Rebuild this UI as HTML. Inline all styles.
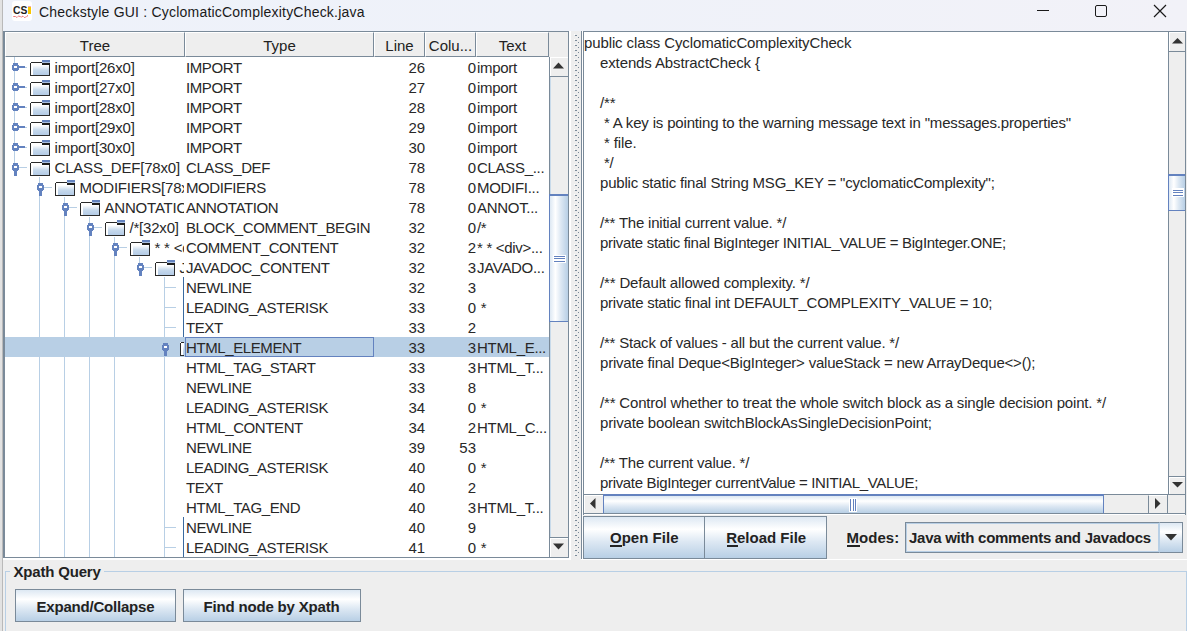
<!DOCTYPE html>
<html><head><meta charset="utf-8"><style>
html,body{margin:0;padding:0;}
body{width:1187px;height:631px;overflow:hidden;position:relative;background:#eeeeee;font-family:"Liberation Sans",sans-serif;}
div,span,svg{position:absolute;box-sizing:border-box;}
.t{font-size:15px;line-height:20px;height:20px;white-space:pre;color:#282828;}
.b{font-size:15px;font-weight:bold;line-height:20px;height:20px;white-space:pre;color:#222;}
</style></head><body>

<div style="left:0px;top:0px;width:1187px;height:31px;background:linear-gradient(90deg,#eef2fa 0%,#eff2f9 50%,#f2f2f8 100%);"></div>
<div style="left:0px;top:0px;width:2px;height:631px;background:#e2e2e2;"></div>
<div style="left:2px;top:0px;width:1px;height:631px;background:#b9b9b9;"></div>
<svg style="left:12px;top:1px" width="20" height="20" viewBox="0 0 20 20"><rect x="0" y="0" width="20" height="20" rx="3" fill="#ffffff"></rect><text x="1" y="12.6" font-family="Liberation Sans" font-weight="bold" font-size="11" fill="#1e1e1e" textLength="14.3" lengthAdjust="spacingAndGlyphs">CS</text><rect x="16" y="5" width="3" height="8" fill="#f7c600"></rect><rect x="16" y="5" width="3" height="1" fill="#f3a6b8"></rect><path d="M1.5 15.5 L3.5 15.5 L5 16.5 L6.5 15 L8 15.5 L9.5 16 L11 15 L12.5 16.5 L14 16 L16 14.5" stroke="#e02020" stroke-width="0.9" fill="none" stroke-dasharray="1.2 0.8"></path></svg>
<span style="left: 39px; top: 2px; font-size: 14px; line-height: 20px; white-space: pre; color: rgb(26, 26, 26); letter-spacing: 0.209px;">Checkstyle GUI : CyclomaticComplexityCheck.java</span>
<div style="left:1037px;top:10px;width:12px;height:1px;background:#1a1a1a;"></div>
<div style="left:1095px;top:5px;width:12px;height:12px;border:1.2px solid #1a1a1a;border-radius:2px;"></div>
<svg style="left:1153px;top:4px" width="14" height="14" viewBox="0 0 14 14"><path d="M1 1 L13 13 M13 1 L1 13" stroke="#1a1a1a" stroke-width="1.2"></path></svg>
<div style="left:3px;top:31px;width:566px;height:527px;background:#ffffff;border-top:1px solid #7a8a99;border-left:2px solid #7a8a99;border-right:1px solid #7a8a99;border-bottom:1px solid #7a8a99;"></div>
<div style="left:5px;top:32px;width:180px;height:25px;background:#eeeeee;border-top:1px solid #fff;border-left:1px solid #fff;border-right:1px solid #7a8a99;border-bottom:1px solid #7a8a99;"></div>
<div style="left:185px;top:32px;width:189px;height:25px;background:#eeeeee;border-top:1px solid #fff;border-left:1px solid #fff;border-right:1px solid #7a8a99;border-bottom:1px solid #7a8a99;"></div>
<div style="left:374px;top:32px;width:51px;height:25px;background:#eeeeee;border-top:1px solid #fff;border-left:1px solid #fff;border-right:1px solid #7a8a99;border-bottom:1px solid #7a8a99;"></div>
<div style="left:425px;top:32px;width:51px;height:25px;background:#eeeeee;border-top:1px solid #fff;border-left:1px solid #fff;border-right:1px solid #7a8a99;border-bottom:1px solid #7a8a99;"></div>
<div style="left:476px;top:32px;width:73px;height:25px;background:#eeeeee;border-top:1px solid #fff;border-left:1px solid #fff;border-right:1px solid #7a8a99;border-bottom:1px solid #7a8a99;"></div>
<div style="left:549px;top:32px;width:19px;height:25px;background:#eeeeee;"></div>
<span class="t" style="left:5px;width:180px;text-align:center;top:36px;color:#222">Tree</span>
<span class="t" style="left:185px;width:189px;text-align:center;top:36px;color:#222">Type</span>
<span class="t" style="left:374px;width:51px;text-align:center;top:36px;color:#222">Line</span>
<span class="t" style="left:425px;width:51px;text-align:center;top:36px;color:#222">Colu...</span>
<span class="t" style="left:476px;width:73px;text-align:center;top:36px;color:#222">Text</span>
<div style="left:5px;top:337px;width:544px;height:20px;background:#b8cfe5;"></div>
<div style="left:185px;top:337px;width:189px;height:20px;border:1px solid #6382bf;"></div>
<div style="left:5px;top:57px;width:544px;height:500px;overflow:hidden">
<svg style="left:0;top:0" width="179" height="500" viewBox="5 57 179 500" shape-rendering="crispEdges"><defs><linearGradient id="fg" x1="0" y1="0" x2="0" y2="1"><stop offset="0" stop-color="#ffffff"></stop><stop offset="0.2" stop-color="#ffffff"></stop><stop offset="0.6" stop-color="#c5d8ec"></stop><stop offset="1" stop-color="#b3cbe6"></stop></linearGradient></defs><rect x="14" y="57" width="1" height="110" fill="#b8cfe5"></rect><rect x="39" y="177" width="1" height="380" fill="#b8cfe5"></rect><rect x="64" y="197" width="1" height="360" fill="#b8cfe5"></rect><rect x="89" y="217" width="1" height="340" fill="#b8cfe5"></rect><rect x="114" y="237" width="1" height="320" fill="#b8cfe5"></rect><rect x="139" y="257" width="1" height="10" fill="#b8cfe5"></rect><rect x="164" y="277" width="1" height="280" fill="#b8cfe5"></rect><rect x="30" y="62" width="20" height="14" fill="#2a2a2a"></rect><rect x="31" y="63" width="18" height="12" fill="url(#fg)"></rect><rect x="31" y="63" width="2" height="12" fill="#ffffff"></rect><rect x="30" y="62" width="1" height="1" fill="#ffffff"></rect><rect x="42" y="60" width="8" height="2" fill="#6382bf"></rect><rect x="42" y="62" width="8" height="1" fill="#a9bfdf"></rect><rect x="42" y="63" width="8" height="2" fill="#1e1e1e"></rect><rect x="13" y="63" width="5" height="2" fill="#6382bf"></rect><rect x="12" y="65" width="7" height="5" fill="#6382bf"></rect><rect x="13" y="70" width="5" height="1" fill="#6382bf"></rect><rect x="14" y="66" width="3" height="2" fill="#ffffff"></rect><rect x="19" y="66" width="6" height="2" fill="#6382bf"></rect><rect x="25" y="67" width="2" height="1" fill="#b8cfe5"></rect><rect x="30" y="82" width="20" height="14" fill="#2a2a2a"></rect><rect x="31" y="83" width="18" height="12" fill="url(#fg)"></rect><rect x="31" y="83" width="2" height="12" fill="#ffffff"></rect><rect x="30" y="82" width="1" height="1" fill="#ffffff"></rect><rect x="42" y="80" width="8" height="2" fill="#6382bf"></rect><rect x="42" y="82" width="8" height="1" fill="#a9bfdf"></rect><rect x="42" y="83" width="8" height="2" fill="#1e1e1e"></rect><rect x="13" y="83" width="5" height="2" fill="#6382bf"></rect><rect x="12" y="85" width="7" height="5" fill="#6382bf"></rect><rect x="13" y="90" width="5" height="1" fill="#6382bf"></rect><rect x="14" y="86" width="3" height="2" fill="#ffffff"></rect><rect x="19" y="86" width="6" height="2" fill="#6382bf"></rect><rect x="25" y="87" width="2" height="1" fill="#b8cfe5"></rect><rect x="30" y="102" width="20" height="14" fill="#2a2a2a"></rect><rect x="31" y="103" width="18" height="12" fill="url(#fg)"></rect><rect x="31" y="103" width="2" height="12" fill="#ffffff"></rect><rect x="30" y="102" width="1" height="1" fill="#ffffff"></rect><rect x="42" y="100" width="8" height="2" fill="#6382bf"></rect><rect x="42" y="102" width="8" height="1" fill="#a9bfdf"></rect><rect x="42" y="103" width="8" height="2" fill="#1e1e1e"></rect><rect x="13" y="103" width="5" height="2" fill="#6382bf"></rect><rect x="12" y="105" width="7" height="5" fill="#6382bf"></rect><rect x="13" y="110" width="5" height="1" fill="#6382bf"></rect><rect x="14" y="106" width="3" height="2" fill="#ffffff"></rect><rect x="19" y="106" width="6" height="2" fill="#6382bf"></rect><rect x="25" y="107" width="2" height="1" fill="#b8cfe5"></rect><rect x="30" y="122" width="20" height="14" fill="#2a2a2a"></rect><rect x="31" y="123" width="18" height="12" fill="url(#fg)"></rect><rect x="31" y="123" width="2" height="12" fill="#ffffff"></rect><rect x="30" y="122" width="1" height="1" fill="#ffffff"></rect><rect x="42" y="120" width="8" height="2" fill="#6382bf"></rect><rect x="42" y="122" width="8" height="1" fill="#a9bfdf"></rect><rect x="42" y="123" width="8" height="2" fill="#1e1e1e"></rect><rect x="13" y="123" width="5" height="2" fill="#6382bf"></rect><rect x="12" y="125" width="7" height="5" fill="#6382bf"></rect><rect x="13" y="130" width="5" height="1" fill="#6382bf"></rect><rect x="14" y="126" width="3" height="2" fill="#ffffff"></rect><rect x="19" y="126" width="6" height="2" fill="#6382bf"></rect><rect x="25" y="127" width="2" height="1" fill="#b8cfe5"></rect><rect x="30" y="142" width="20" height="14" fill="#2a2a2a"></rect><rect x="31" y="143" width="18" height="12" fill="url(#fg)"></rect><rect x="31" y="143" width="2" height="12" fill="#ffffff"></rect><rect x="30" y="142" width="1" height="1" fill="#ffffff"></rect><rect x="42" y="140" width="8" height="2" fill="#6382bf"></rect><rect x="42" y="142" width="8" height="1" fill="#a9bfdf"></rect><rect x="42" y="143" width="8" height="2" fill="#1e1e1e"></rect><rect x="13" y="143" width="5" height="2" fill="#6382bf"></rect><rect x="12" y="145" width="7" height="5" fill="#6382bf"></rect><rect x="13" y="150" width="5" height="1" fill="#6382bf"></rect><rect x="14" y="146" width="3" height="2" fill="#ffffff"></rect><rect x="19" y="146" width="6" height="2" fill="#6382bf"></rect><rect x="25" y="147" width="2" height="1" fill="#b8cfe5"></rect><rect x="30" y="162" width="20" height="14" fill="#2a2a2a"></rect><rect x="31" y="163" width="18" height="12" fill="url(#fg)"></rect><rect x="31" y="163" width="2" height="12" fill="#ffffff"></rect><rect x="30" y="162" width="1" height="1" fill="#ffffff"></rect><rect x="42" y="160" width="8" height="2" fill="#6382bf"></rect><rect x="42" y="162" width="8" height="1" fill="#a9bfdf"></rect><rect x="42" y="163" width="8" height="2" fill="#1e1e1e"></rect><rect x="13" y="163" width="5" height="2" fill="#6382bf"></rect><rect x="12" y="165" width="7" height="5" fill="#6382bf"></rect><rect x="13" y="170" width="5" height="1" fill="#6382bf"></rect><rect x="14" y="166" width="3" height="2" fill="#ffffff"></rect><rect x="14" y="170" width="3" height="6" fill="#6382bf"></rect><rect x="19" y="167" width="8" height="1" fill="#b8cfe5"></rect><rect x="55" y="182" width="20" height="14" fill="#2a2a2a"></rect><rect x="56" y="183" width="18" height="12" fill="url(#fg)"></rect><rect x="56" y="183" width="2" height="12" fill="#ffffff"></rect><rect x="55" y="182" width="1" height="1" fill="#ffffff"></rect><rect x="67" y="180" width="8" height="2" fill="#6382bf"></rect><rect x="67" y="182" width="8" height="1" fill="#a9bfdf"></rect><rect x="67" y="183" width="8" height="2" fill="#1e1e1e"></rect><rect x="38" y="183" width="5" height="2" fill="#6382bf"></rect><rect x="37" y="185" width="7" height="5" fill="#6382bf"></rect><rect x="38" y="190" width="5" height="1" fill="#6382bf"></rect><rect x="39" y="186" width="3" height="2" fill="#ffffff"></rect><rect x="39" y="190" width="3" height="6" fill="#6382bf"></rect><rect x="44" y="187" width="8" height="1" fill="#b8cfe5"></rect><rect x="80" y="202" width="20" height="14" fill="#2a2a2a"></rect><rect x="81" y="203" width="18" height="12" fill="url(#fg)"></rect><rect x="81" y="203" width="2" height="12" fill="#ffffff"></rect><rect x="80" y="202" width="1" height="1" fill="#ffffff"></rect><rect x="92" y="200" width="8" height="2" fill="#6382bf"></rect><rect x="92" y="202" width="8" height="1" fill="#a9bfdf"></rect><rect x="92" y="203" width="8" height="2" fill="#1e1e1e"></rect><rect x="63" y="203" width="5" height="2" fill="#6382bf"></rect><rect x="62" y="205" width="7" height="5" fill="#6382bf"></rect><rect x="63" y="210" width="5" height="1" fill="#6382bf"></rect><rect x="64" y="206" width="3" height="2" fill="#ffffff"></rect><rect x="64" y="210" width="3" height="6" fill="#6382bf"></rect><rect x="69" y="207" width="8" height="1" fill="#b8cfe5"></rect><rect x="105" y="222" width="20" height="14" fill="#2a2a2a"></rect><rect x="106" y="223" width="18" height="12" fill="url(#fg)"></rect><rect x="106" y="223" width="2" height="12" fill="#ffffff"></rect><rect x="105" y="222" width="1" height="1" fill="#ffffff"></rect><rect x="117" y="220" width="8" height="2" fill="#6382bf"></rect><rect x="117" y="222" width="8" height="1" fill="#a9bfdf"></rect><rect x="117" y="223" width="8" height="2" fill="#1e1e1e"></rect><rect x="88" y="223" width="5" height="2" fill="#6382bf"></rect><rect x="87" y="225" width="7" height="5" fill="#6382bf"></rect><rect x="88" y="230" width="5" height="1" fill="#6382bf"></rect><rect x="89" y="226" width="3" height="2" fill="#ffffff"></rect><rect x="89" y="230" width="3" height="6" fill="#6382bf"></rect><rect x="94" y="227" width="8" height="1" fill="#b8cfe5"></rect><rect x="130" y="242" width="20" height="14" fill="#2a2a2a"></rect><rect x="131" y="243" width="18" height="12" fill="url(#fg)"></rect><rect x="131" y="243" width="2" height="12" fill="#ffffff"></rect><rect x="130" y="242" width="1" height="1" fill="#ffffff"></rect><rect x="142" y="240" width="8" height="2" fill="#6382bf"></rect><rect x="142" y="242" width="8" height="1" fill="#a9bfdf"></rect><rect x="142" y="243" width="8" height="2" fill="#1e1e1e"></rect><rect x="113" y="243" width="5" height="2" fill="#6382bf"></rect><rect x="112" y="245" width="7" height="5" fill="#6382bf"></rect><rect x="113" y="250" width="5" height="1" fill="#6382bf"></rect><rect x="114" y="246" width="3" height="2" fill="#ffffff"></rect><rect x="114" y="250" width="3" height="6" fill="#6382bf"></rect><rect x="119" y="247" width="8" height="1" fill="#b8cfe5"></rect><rect x="155" y="262" width="20" height="14" fill="#2a2a2a"></rect><rect x="156" y="263" width="18" height="12" fill="url(#fg)"></rect><rect x="156" y="263" width="2" height="12" fill="#ffffff"></rect><rect x="155" y="262" width="1" height="1" fill="#ffffff"></rect><rect x="167" y="260" width="8" height="2" fill="#6382bf"></rect><rect x="167" y="262" width="8" height="1" fill="#a9bfdf"></rect><rect x="167" y="263" width="8" height="2" fill="#1e1e1e"></rect><rect x="138" y="263" width="5" height="2" fill="#6382bf"></rect><rect x="137" y="265" width="7" height="5" fill="#6382bf"></rect><rect x="138" y="270" width="5" height="1" fill="#6382bf"></rect><rect x="139" y="266" width="3" height="2" fill="#ffffff"></rect><rect x="139" y="270" width="3" height="6" fill="#6382bf"></rect><rect x="144" y="267" width="8" height="1" fill="#b8cfe5"></rect><rect x="164" y="287" width="12" height="1" fill="#b8cfe5"></rect><rect x="183" y="277" width="1" height="20" fill="#3a6aa0"></rect><rect x="184" y="277" width="1" height="1" fill="#3a6aa0"></rect><rect x="184" y="278" width="1" height="18" fill="#d6e3f1"></rect><rect x="164" y="307" width="12" height="1" fill="#b8cfe5"></rect><rect x="183" y="297" width="1" height="20" fill="#3a6aa0"></rect><rect x="184" y="297" width="1" height="1" fill="#3a6aa0"></rect><rect x="184" y="298" width="1" height="18" fill="#d6e3f1"></rect><rect x="164" y="327" width="12" height="1" fill="#b8cfe5"></rect><rect x="183" y="317" width="1" height="20" fill="#3a6aa0"></rect><rect x="184" y="317" width="1" height="1" fill="#3a6aa0"></rect><rect x="184" y="318" width="1" height="18" fill="#d6e3f1"></rect><rect x="180" y="342" width="20" height="14" fill="#2a2a2a"></rect><rect x="181" y="343" width="18" height="12" fill="url(#fg)"></rect><rect x="181" y="343" width="2" height="12" fill="#ffffff"></rect><rect x="180" y="342" width="1" height="1" fill="#ffffff"></rect><rect x="192" y="340" width="8" height="2" fill="#6382bf"></rect><rect x="192" y="342" width="8" height="1" fill="#a9bfdf"></rect><rect x="192" y="343" width="8" height="2" fill="#1e1e1e"></rect><rect x="163" y="343" width="5" height="2" fill="#6382bf"></rect><rect x="162" y="345" width="7" height="5" fill="#6382bf"></rect><rect x="163" y="350" width="5" height="1" fill="#6382bf"></rect><rect x="164" y="346" width="3" height="2" fill="#ffffff"></rect><rect x="164" y="350" width="3" height="6" fill="#6382bf"></rect><rect x="169" y="347" width="8" height="1" fill="#b8cfe5"></rect><rect x="164" y="527" width="12" height="1" fill="#b8cfe5"></rect><rect x="183" y="517" width="1" height="20" fill="#3a6aa0"></rect><rect x="184" y="517" width="1" height="1" fill="#3a6aa0"></rect><rect x="184" y="518" width="1" height="18" fill="#d6e3f1"></rect><rect x="164" y="547" width="12" height="1" fill="#b8cfe5"></rect><rect x="183" y="537" width="1" height="20" fill="#3a6aa0"></rect><rect x="184" y="537" width="1" height="1" fill="#3a6aa0"></rect><rect x="184" y="538" width="1" height="18" fill="#d6e3f1"></rect></svg>
<div style="left:0;top:0;width:179px;height:500px;overflow:hidden">
<span class="t" style="left:49.5px;top:1px;letter-spacing:-0.2px">import[26x0]</span>
<span class="t" style="left:49.5px;top:21px;letter-spacing:-0.2px">import[27x0]</span>
<span class="t" style="left:49.5px;top:41px;letter-spacing:-0.2px">import[28x0]</span>
<span class="t" style="left:49.5px;top:61px;letter-spacing:-0.2px">import[29x0]</span>
<span class="t" style="left:49.5px;top:81px;letter-spacing:-0.2px">import[30x0]</span>
<span class="t" style="left:49.5px;top:101px;letter-spacing:-0.2px">CLASS_DEF[78x0]</span>
<span class="t" style="left:74.5px;top:121px;letter-spacing:-0.2px">MODIFIERS[78x0]</span>
<span class="t" style="left:99.5px;top:141px;letter-spacing:-0.2px">ANNOTATION[78x0]</span>
<span class="t" style="left:124.5px;top:161px;letter-spacing:-0.2px">/*[32x0]</span>
<span class="t" style="left:149.5px;top:181px;letter-spacing:-0.2px">* * &lt;div&gt;</span>
<span class="t" style="left:174.5px;top:201px;letter-spacing:-0.2px">JAVADOC_CONTENT</span>
</div>
<span class="t" style="left:181px;top:1px;letter-spacing:-0.4px">IMPORT</span>
<span class="t" style="left:369px;width:51px;text-align:right;top:1px;letter-spacing:-0.1px">26</span>
<span class="t" style="left:420px;width:51px;text-align:right;top:1px">0</span>
<span class="t" style="left:472px;top:1px;letter-spacing:-0.3px">import</span>
<span class="t" style="left:181px;top:21px;letter-spacing:-0.4px">IMPORT</span>
<span class="t" style="left:369px;width:51px;text-align:right;top:21px;letter-spacing:-0.1px">27</span>
<span class="t" style="left:420px;width:51px;text-align:right;top:21px">0</span>
<span class="t" style="left:472px;top:21px;letter-spacing:-0.3px">import</span>
<span class="t" style="left:181px;top:41px;letter-spacing:-0.4px">IMPORT</span>
<span class="t" style="left:369px;width:51px;text-align:right;top:41px;letter-spacing:-0.1px">28</span>
<span class="t" style="left:420px;width:51px;text-align:right;top:41px">0</span>
<span class="t" style="left:472px;top:41px;letter-spacing:-0.3px">import</span>
<span class="t" style="left:181px;top:61px;letter-spacing:-0.4px">IMPORT</span>
<span class="t" style="left:369px;width:51px;text-align:right;top:61px;letter-spacing:-0.1px">29</span>
<span class="t" style="left:420px;width:51px;text-align:right;top:61px">0</span>
<span class="t" style="left:472px;top:61px;letter-spacing:-0.3px">import</span>
<span class="t" style="left:181px;top:81px;letter-spacing:-0.4px">IMPORT</span>
<span class="t" style="left:369px;width:51px;text-align:right;top:81px;letter-spacing:-0.1px">30</span>
<span class="t" style="left:420px;width:51px;text-align:right;top:81px">0</span>
<span class="t" style="left:472px;top:81px;letter-spacing:-0.3px">import</span>
<span class="t" style="left:181px;top:101px;letter-spacing:-0.4px">CLASS_DEF</span>
<span class="t" style="left:369px;width:51px;text-align:right;top:101px;letter-spacing:-0.1px">78</span>
<span class="t" style="left:420px;width:51px;text-align:right;top:101px">0</span>
<span class="t" style="left:472px;top:101px;letter-spacing:-0.3px">CLASS_...</span>
<span class="t" style="left:181px;top:121px;letter-spacing:-0.4px">MODIFIERS</span>
<span class="t" style="left:369px;width:51px;text-align:right;top:121px;letter-spacing:-0.1px">78</span>
<span class="t" style="left:420px;width:51px;text-align:right;top:121px">0</span>
<span class="t" style="left:472px;top:121px;letter-spacing:-0.3px">MODIFI...</span>
<span class="t" style="left:181px;top:141px;letter-spacing:-0.4px">ANNOTATION</span>
<span class="t" style="left:369px;width:51px;text-align:right;top:141px;letter-spacing:-0.1px">78</span>
<span class="t" style="left:420px;width:51px;text-align:right;top:141px">0</span>
<span class="t" style="left:472px;top:141px;letter-spacing:-0.3px">ANNOT...</span>
<span class="t" style="left:181px;top:161px;letter-spacing:-0.4px">BLOCK_COMMENT_BEGIN</span>
<span class="t" style="left:369px;width:51px;text-align:right;top:161px;letter-spacing:-0.1px">32</span>
<span class="t" style="left:420px;width:51px;text-align:right;top:161px">0</span>
<span class="t" style="left:472px;top:161px;letter-spacing:-0.3px">/*</span>
<span class="t" style="left:181px;top:181px;letter-spacing:-0.4px">COMMENT_CONTENT</span>
<span class="t" style="left:369px;width:51px;text-align:right;top:181px;letter-spacing:-0.1px">32</span>
<span class="t" style="left:420px;width:51px;text-align:right;top:181px">2</span>
<span class="t" style="left:472px;top:181px;letter-spacing:-0.3px">* * &lt;div&gt;...</span>
<span class="t" style="left:181px;top:201px;letter-spacing:-0.4px">JAVADOC_CONTENT</span>
<span class="t" style="left:369px;width:51px;text-align:right;top:201px;letter-spacing:-0.1px">32</span>
<span class="t" style="left:420px;width:51px;text-align:right;top:201px">3</span>
<span class="t" style="left:472px;top:201px;letter-spacing:-0.3px">JAVADO...</span>
<span class="t" style="left:181px;top:221px;letter-spacing:-0.4px">NEWLINE</span>
<span class="t" style="left:369px;width:51px;text-align:right;top:221px;letter-spacing:-0.1px">32</span>
<span class="t" style="left:420px;width:51px;text-align:right;top:221px">3</span>
<span class="t" style="left:181px;top:241px;letter-spacing:-0.4px">LEADING_ASTERISK</span>
<span class="t" style="left:369px;width:51px;text-align:right;top:241px;letter-spacing:-0.1px">33</span>
<span class="t" style="left:420px;width:51px;text-align:right;top:241px">0</span>
<span class="t" style="left:472px;top:241px;letter-spacing:-0.3px"> *</span>
<span class="t" style="left:181px;top:261px;letter-spacing:-0.4px">TEXT</span>
<span class="t" style="left:369px;width:51px;text-align:right;top:261px;letter-spacing:-0.1px">33</span>
<span class="t" style="left:420px;width:51px;text-align:right;top:261px">2</span>
<span class="t" style="left:181px;top:281px;letter-spacing:-0.4px">HTML_ELEMENT</span>
<span class="t" style="left:369px;width:51px;text-align:right;top:281px;letter-spacing:-0.1px">33</span>
<span class="t" style="left:420px;width:51px;text-align:right;top:281px">3</span>
<span class="t" style="left:472px;top:281px;letter-spacing:-0.3px">HTML_E...</span>
<span class="t" style="left:181px;top:301px;letter-spacing:-0.4px">HTML_TAG_START</span>
<span class="t" style="left:369px;width:51px;text-align:right;top:301px;letter-spacing:-0.1px">33</span>
<span class="t" style="left:420px;width:51px;text-align:right;top:301px">3</span>
<span class="t" style="left:472px;top:301px;letter-spacing:-0.3px">HTML_T...</span>
<span class="t" style="left:181px;top:321px;letter-spacing:-0.4px">NEWLINE</span>
<span class="t" style="left:369px;width:51px;text-align:right;top:321px;letter-spacing:-0.1px">33</span>
<span class="t" style="left:420px;width:51px;text-align:right;top:321px">8</span>
<span class="t" style="left:181px;top:341px;letter-spacing:-0.4px">LEADING_ASTERISK</span>
<span class="t" style="left:369px;width:51px;text-align:right;top:341px;letter-spacing:-0.1px">34</span>
<span class="t" style="left:420px;width:51px;text-align:right;top:341px">0</span>
<span class="t" style="left:472px;top:341px;letter-spacing:-0.3px"> *</span>
<span class="t" style="left:181px;top:361px;letter-spacing:-0.4px">HTML_CONTENT</span>
<span class="t" style="left:369px;width:51px;text-align:right;top:361px;letter-spacing:-0.1px">34</span>
<span class="t" style="left:420px;width:51px;text-align:right;top:361px">2</span>
<span class="t" style="left:472px;top:361px;letter-spacing:-0.3px">HTML_C...</span>
<span class="t" style="left:181px;top:381px;letter-spacing:-0.4px">NEWLINE</span>
<span class="t" style="left:369px;width:51px;text-align:right;top:381px;letter-spacing:-0.1px">39</span>
<span class="t" style="left:420px;width:51px;text-align:right;top:381px">53</span>
<span class="t" style="left:181px;top:401px;letter-spacing:-0.4px">LEADING_ASTERISK</span>
<span class="t" style="left:369px;width:51px;text-align:right;top:401px;letter-spacing:-0.1px">40</span>
<span class="t" style="left:420px;width:51px;text-align:right;top:401px">0</span>
<span class="t" style="left:472px;top:401px;letter-spacing:-0.3px"> *</span>
<span class="t" style="left:181px;top:421px;letter-spacing:-0.4px">TEXT</span>
<span class="t" style="left:369px;width:51px;text-align:right;top:421px;letter-spacing:-0.1px">40</span>
<span class="t" style="left:420px;width:51px;text-align:right;top:421px">2</span>
<span class="t" style="left:181px;top:441px;letter-spacing:-0.4px">HTML_TAG_END</span>
<span class="t" style="left:369px;width:51px;text-align:right;top:441px;letter-spacing:-0.1px">40</span>
<span class="t" style="left:420px;width:51px;text-align:right;top:441px">3</span>
<span class="t" style="left:472px;top:441px;letter-spacing:-0.3px">HTML_T...</span>
<span class="t" style="left:181px;top:461px;letter-spacing:-0.4px">NEWLINE</span>
<span class="t" style="left:369px;width:51px;text-align:right;top:461px;letter-spacing:-0.1px">40</span>
<span class="t" style="left:420px;width:51px;text-align:right;top:461px">9</span>
<span class="t" style="left:181px;top:481px;letter-spacing:-0.4px">LEADING_ASTERISK</span>
<span class="t" style="left:369px;width:51px;text-align:right;top:481px;letter-spacing:-0.1px">41</span>
<span class="t" style="left:420px;width:51px;text-align:right;top:481px">0</span>
<span class="t" style="left:472px;top:481px;letter-spacing:-0.3px"> *</span>
</div>
<div style="left:549px;top:57px;width:19px;height:500px;background:#eeeeee;border-left:1px solid #7a8a99;"></div>
<div style="left:550px;top:77px;width:1px;height:460px;background:#c8daea;"></div>
<div style="left:549px;top:57px;width:19px;height:20px;background:#eeeeee;border-left:1px solid #7a8a99;border-bottom:1px solid #7a8a99;"></div>
<div style="left:550px;top:57px;width:1px;height:19px;background:#fff;"></div>
<div style="left:550px;top:57px;width:18px;height:1px;background:#fff;"></div>
<svg style="left:553px;top:62px" width="11" height="7" viewBox="0 0 11 7"><path d="M0 6.5 L5.5 0.5 L11 6.5 Z" fill="#333"></path></svg>
<div style="left:549px;top:537px;width:19px;height:20px;background:#eeeeee;border-top:1px solid #7a8a99;border-left:1px solid #7a8a99;"></div>
<div style="left:550px;top:538px;width:1px;height:19px;background:#fff;"></div>
<div style="left:550px;top:538px;width:18px;height:1px;background:#fff;"></div>
<svg style="left:553px;top:543px" width="11" height="7" viewBox="0 0 11 7"><path d="M0 0.5 L5.5 6.5 L11 0.5 Z" fill="#333"></path></svg>
<div style="left:549px;top:194px;width:19px;height:128px;background:linear-gradient(90deg,#dde8f3 0%,#ffffff 30%,#dde8f3 60%,#b8cfe5 100%);border:1px solid #6382bf;border-top-width:2px;border-right:none;"></div>
<div style="left:553px;top:255px;width:13px;height:8px;background:#ffffff;"></div>
<div style="left:554px;top:256px;width:11px;height:1px;background:#6382bf;"></div>
<div style="left:554px;top:258px;width:11px;height:1px;background:#6382bf;"></div>
<div style="left:554px;top:261px;width:11px;height:1px;background:#6382bf;"></div>
<div style="left:569px;top:31px;width:2px;height:527px;background:#ffffff;"></div>
<svg style="left:0;top:0" width="1187" height="631"><rect x="574" y="34" width="1" height="1" fill="#ffffff"></rect><rect x="575" y="35" width="2" height="1" fill="#7a8a99"></rect><rect x="578" y="37" width="1" height="1" fill="#7a8a99"></rect><rect x="574" y="39" width="1" height="1" fill="#ffffff"></rect><rect x="575" y="40" width="2" height="1" fill="#7a8a99"></rect><rect x="578" y="42" width="1" height="1" fill="#7a8a99"></rect><rect x="574" y="44" width="1" height="1" fill="#ffffff"></rect><rect x="575" y="45" width="2" height="1" fill="#7a8a99"></rect><rect x="578" y="47" width="1" height="1" fill="#7a8a99"></rect><rect x="574" y="49" width="1" height="1" fill="#ffffff"></rect><rect x="575" y="50" width="2" height="1" fill="#7a8a99"></rect><rect x="578" y="52" width="1" height="1" fill="#7a8a99"></rect><rect x="574" y="54" width="1" height="1" fill="#ffffff"></rect><rect x="575" y="55" width="2" height="1" fill="#7a8a99"></rect><rect x="578" y="57" width="1" height="1" fill="#7a8a99"></rect><rect x="574" y="59" width="1" height="1" fill="#ffffff"></rect><rect x="575" y="60" width="2" height="1" fill="#7a8a99"></rect><rect x="578" y="62" width="1" height="1" fill="#7a8a99"></rect><rect x="574" y="64" width="1" height="1" fill="#ffffff"></rect><rect x="575" y="65" width="2" height="1" fill="#7a8a99"></rect><rect x="578" y="67" width="1" height="1" fill="#7a8a99"></rect><rect x="574" y="69" width="1" height="1" fill="#ffffff"></rect><rect x="575" y="70" width="2" height="1" fill="#7a8a99"></rect><rect x="578" y="72" width="1" height="1" fill="#7a8a99"></rect><rect x="574" y="74" width="1" height="1" fill="#ffffff"></rect><rect x="575" y="75" width="2" height="1" fill="#7a8a99"></rect><rect x="578" y="77" width="1" height="1" fill="#7a8a99"></rect><rect x="574" y="79" width="1" height="1" fill="#ffffff"></rect><rect x="575" y="80" width="2" height="1" fill="#7a8a99"></rect><rect x="578" y="82" width="1" height="1" fill="#7a8a99"></rect><rect x="574" y="84" width="1" height="1" fill="#ffffff"></rect><rect x="575" y="85" width="2" height="1" fill="#7a8a99"></rect><rect x="578" y="87" width="1" height="1" fill="#7a8a99"></rect><rect x="574" y="89" width="1" height="1" fill="#ffffff"></rect><rect x="575" y="90" width="2" height="1" fill="#7a8a99"></rect><rect x="578" y="92" width="1" height="1" fill="#7a8a99"></rect><rect x="574" y="94" width="1" height="1" fill="#ffffff"></rect><rect x="575" y="95" width="2" height="1" fill="#7a8a99"></rect><rect x="578" y="97" width="1" height="1" fill="#7a8a99"></rect><rect x="574" y="99" width="1" height="1" fill="#ffffff"></rect><rect x="575" y="100" width="2" height="1" fill="#7a8a99"></rect><rect x="578" y="102" width="1" height="1" fill="#7a8a99"></rect><rect x="574" y="104" width="1" height="1" fill="#ffffff"></rect><rect x="575" y="105" width="2" height="1" fill="#7a8a99"></rect><rect x="578" y="107" width="1" height="1" fill="#7a8a99"></rect><rect x="574" y="109" width="1" height="1" fill="#ffffff"></rect><rect x="575" y="110" width="2" height="1" fill="#7a8a99"></rect><rect x="578" y="112" width="1" height="1" fill="#7a8a99"></rect><rect x="574" y="114" width="1" height="1" fill="#ffffff"></rect><rect x="575" y="115" width="2" height="1" fill="#7a8a99"></rect><rect x="578" y="117" width="1" height="1" fill="#7a8a99"></rect><rect x="574" y="119" width="1" height="1" fill="#ffffff"></rect><rect x="575" y="120" width="2" height="1" fill="#7a8a99"></rect><rect x="578" y="122" width="1" height="1" fill="#7a8a99"></rect><rect x="574" y="124" width="1" height="1" fill="#ffffff"></rect><rect x="575" y="125" width="2" height="1" fill="#7a8a99"></rect><rect x="578" y="127" width="1" height="1" fill="#7a8a99"></rect><rect x="574" y="129" width="1" height="1" fill="#ffffff"></rect><rect x="575" y="130" width="2" height="1" fill="#7a8a99"></rect><rect x="578" y="132" width="1" height="1" fill="#7a8a99"></rect><rect x="574" y="134" width="1" height="1" fill="#ffffff"></rect><rect x="575" y="135" width="2" height="1" fill="#7a8a99"></rect><rect x="578" y="137" width="1" height="1" fill="#7a8a99"></rect><rect x="574" y="139" width="1" height="1" fill="#ffffff"></rect><rect x="575" y="140" width="2" height="1" fill="#7a8a99"></rect><rect x="578" y="142" width="1" height="1" fill="#7a8a99"></rect><rect x="574" y="144" width="1" height="1" fill="#ffffff"></rect><rect x="575" y="145" width="2" height="1" fill="#7a8a99"></rect><rect x="578" y="147" width="1" height="1" fill="#7a8a99"></rect><rect x="574" y="149" width="1" height="1" fill="#ffffff"></rect><rect x="575" y="150" width="2" height="1" fill="#7a8a99"></rect><rect x="578" y="152" width="1" height="1" fill="#7a8a99"></rect><rect x="574" y="154" width="1" height="1" fill="#ffffff"></rect><rect x="575" y="155" width="2" height="1" fill="#7a8a99"></rect><rect x="578" y="157" width="1" height="1" fill="#7a8a99"></rect><rect x="574" y="159" width="1" height="1" fill="#ffffff"></rect><rect x="575" y="160" width="2" height="1" fill="#7a8a99"></rect><rect x="578" y="162" width="1" height="1" fill="#7a8a99"></rect><rect x="574" y="164" width="1" height="1" fill="#ffffff"></rect><rect x="575" y="165" width="2" height="1" fill="#7a8a99"></rect><rect x="578" y="167" width="1" height="1" fill="#7a8a99"></rect><rect x="574" y="169" width="1" height="1" fill="#ffffff"></rect><rect x="575" y="170" width="2" height="1" fill="#7a8a99"></rect><rect x="578" y="172" width="1" height="1" fill="#7a8a99"></rect><rect x="574" y="174" width="1" height="1" fill="#ffffff"></rect><rect x="575" y="175" width="2" height="1" fill="#7a8a99"></rect><rect x="578" y="177" width="1" height="1" fill="#7a8a99"></rect><rect x="574" y="179" width="1" height="1" fill="#ffffff"></rect><rect x="575" y="180" width="2" height="1" fill="#7a8a99"></rect><rect x="578" y="182" width="1" height="1" fill="#7a8a99"></rect><rect x="574" y="184" width="1" height="1" fill="#ffffff"></rect><rect x="575" y="185" width="2" height="1" fill="#7a8a99"></rect><rect x="578" y="187" width="1" height="1" fill="#7a8a99"></rect><rect x="574" y="189" width="1" height="1" fill="#ffffff"></rect><rect x="575" y="190" width="2" height="1" fill="#7a8a99"></rect><rect x="578" y="192" width="1" height="1" fill="#7a8a99"></rect><rect x="574" y="194" width="1" height="1" fill="#ffffff"></rect><rect x="575" y="195" width="2" height="1" fill="#7a8a99"></rect><rect x="578" y="197" width="1" height="1" fill="#7a8a99"></rect><rect x="574" y="199" width="1" height="1" fill="#ffffff"></rect><rect x="575" y="200" width="2" height="1" fill="#7a8a99"></rect><rect x="578" y="202" width="1" height="1" fill="#7a8a99"></rect><rect x="574" y="204" width="1" height="1" fill="#ffffff"></rect><rect x="575" y="205" width="2" height="1" fill="#7a8a99"></rect><rect x="578" y="207" width="1" height="1" fill="#7a8a99"></rect><rect x="574" y="209" width="1" height="1" fill="#ffffff"></rect><rect x="575" y="210" width="2" height="1" fill="#7a8a99"></rect><rect x="578" y="212" width="1" height="1" fill="#7a8a99"></rect><rect x="574" y="214" width="1" height="1" fill="#ffffff"></rect><rect x="575" y="215" width="2" height="1" fill="#7a8a99"></rect><rect x="578" y="217" width="1" height="1" fill="#7a8a99"></rect><rect x="574" y="219" width="1" height="1" fill="#ffffff"></rect><rect x="575" y="220" width="2" height="1" fill="#7a8a99"></rect><rect x="578" y="222" width="1" height="1" fill="#7a8a99"></rect><rect x="574" y="224" width="1" height="1" fill="#ffffff"></rect><rect x="575" y="225" width="2" height="1" fill="#7a8a99"></rect><rect x="578" y="227" width="1" height="1" fill="#7a8a99"></rect><rect x="574" y="229" width="1" height="1" fill="#ffffff"></rect><rect x="575" y="230" width="2" height="1" fill="#7a8a99"></rect><rect x="578" y="232" width="1" height="1" fill="#7a8a99"></rect><rect x="574" y="234" width="1" height="1" fill="#ffffff"></rect><rect x="575" y="235" width="2" height="1" fill="#7a8a99"></rect><rect x="578" y="237" width="1" height="1" fill="#7a8a99"></rect><rect x="574" y="239" width="1" height="1" fill="#ffffff"></rect><rect x="575" y="240" width="2" height="1" fill="#7a8a99"></rect><rect x="578" y="242" width="1" height="1" fill="#7a8a99"></rect><rect x="574" y="244" width="1" height="1" fill="#ffffff"></rect><rect x="575" y="245" width="2" height="1" fill="#7a8a99"></rect><rect x="578" y="247" width="1" height="1" fill="#7a8a99"></rect><rect x="574" y="249" width="1" height="1" fill="#ffffff"></rect><rect x="575" y="250" width="2" height="1" fill="#7a8a99"></rect><rect x="578" y="252" width="1" height="1" fill="#7a8a99"></rect><rect x="574" y="254" width="1" height="1" fill="#ffffff"></rect><rect x="575" y="255" width="2" height="1" fill="#7a8a99"></rect><rect x="578" y="257" width="1" height="1" fill="#7a8a99"></rect><rect x="574" y="259" width="1" height="1" fill="#ffffff"></rect><rect x="575" y="260" width="2" height="1" fill="#7a8a99"></rect><rect x="578" y="262" width="1" height="1" fill="#7a8a99"></rect><rect x="574" y="264" width="1" height="1" fill="#ffffff"></rect><rect x="575" y="265" width="2" height="1" fill="#7a8a99"></rect><rect x="578" y="267" width="1" height="1" fill="#7a8a99"></rect><rect x="574" y="269" width="1" height="1" fill="#ffffff"></rect><rect x="575" y="270" width="2" height="1" fill="#7a8a99"></rect><rect x="578" y="272" width="1" height="1" fill="#7a8a99"></rect><rect x="574" y="274" width="1" height="1" fill="#ffffff"></rect><rect x="575" y="275" width="2" height="1" fill="#7a8a99"></rect><rect x="578" y="277" width="1" height="1" fill="#7a8a99"></rect><rect x="574" y="279" width="1" height="1" fill="#ffffff"></rect><rect x="575" y="280" width="2" height="1" fill="#7a8a99"></rect><rect x="578" y="282" width="1" height="1" fill="#7a8a99"></rect><rect x="574" y="284" width="1" height="1" fill="#ffffff"></rect><rect x="575" y="285" width="2" height="1" fill="#7a8a99"></rect><rect x="578" y="287" width="1" height="1" fill="#7a8a99"></rect><rect x="574" y="289" width="1" height="1" fill="#ffffff"></rect><rect x="575" y="290" width="2" height="1" fill="#7a8a99"></rect><rect x="578" y="292" width="1" height="1" fill="#7a8a99"></rect><rect x="574" y="294" width="1" height="1" fill="#ffffff"></rect><rect x="575" y="295" width="2" height="1" fill="#7a8a99"></rect><rect x="578" y="297" width="1" height="1" fill="#7a8a99"></rect><rect x="574" y="299" width="1" height="1" fill="#ffffff"></rect><rect x="575" y="300" width="2" height="1" fill="#7a8a99"></rect><rect x="578" y="302" width="1" height="1" fill="#7a8a99"></rect><rect x="574" y="304" width="1" height="1" fill="#ffffff"></rect><rect x="575" y="305" width="2" height="1" fill="#7a8a99"></rect><rect x="578" y="307" width="1" height="1" fill="#7a8a99"></rect><rect x="574" y="309" width="1" height="1" fill="#ffffff"></rect><rect x="575" y="310" width="2" height="1" fill="#7a8a99"></rect><rect x="578" y="312" width="1" height="1" fill="#7a8a99"></rect><rect x="574" y="314" width="1" height="1" fill="#ffffff"></rect><rect x="575" y="315" width="2" height="1" fill="#7a8a99"></rect><rect x="578" y="317" width="1" height="1" fill="#7a8a99"></rect><rect x="574" y="319" width="1" height="1" fill="#ffffff"></rect><rect x="575" y="320" width="2" height="1" fill="#7a8a99"></rect><rect x="578" y="322" width="1" height="1" fill="#7a8a99"></rect><rect x="574" y="324" width="1" height="1" fill="#ffffff"></rect><rect x="575" y="325" width="2" height="1" fill="#7a8a99"></rect><rect x="578" y="327" width="1" height="1" fill="#7a8a99"></rect><rect x="574" y="329" width="1" height="1" fill="#ffffff"></rect><rect x="575" y="330" width="2" height="1" fill="#7a8a99"></rect><rect x="578" y="332" width="1" height="1" fill="#7a8a99"></rect><rect x="574" y="334" width="1" height="1" fill="#ffffff"></rect><rect x="575" y="335" width="2" height="1" fill="#7a8a99"></rect><rect x="578" y="337" width="1" height="1" fill="#7a8a99"></rect><rect x="574" y="339" width="1" height="1" fill="#ffffff"></rect><rect x="575" y="340" width="2" height="1" fill="#7a8a99"></rect><rect x="578" y="342" width="1" height="1" fill="#7a8a99"></rect><rect x="574" y="344" width="1" height="1" fill="#ffffff"></rect><rect x="575" y="345" width="2" height="1" fill="#7a8a99"></rect><rect x="578" y="347" width="1" height="1" fill="#7a8a99"></rect><rect x="574" y="349" width="1" height="1" fill="#ffffff"></rect><rect x="575" y="350" width="2" height="1" fill="#7a8a99"></rect><rect x="578" y="352" width="1" height="1" fill="#7a8a99"></rect><rect x="574" y="354" width="1" height="1" fill="#ffffff"></rect><rect x="575" y="355" width="2" height="1" fill="#7a8a99"></rect><rect x="578" y="357" width="1" height="1" fill="#7a8a99"></rect><rect x="574" y="359" width="1" height="1" fill="#ffffff"></rect><rect x="575" y="360" width="2" height="1" fill="#7a8a99"></rect><rect x="578" y="362" width="1" height="1" fill="#7a8a99"></rect><rect x="574" y="364" width="1" height="1" fill="#ffffff"></rect><rect x="575" y="365" width="2" height="1" fill="#7a8a99"></rect><rect x="578" y="367" width="1" height="1" fill="#7a8a99"></rect><rect x="574" y="369" width="1" height="1" fill="#ffffff"></rect><rect x="575" y="370" width="2" height="1" fill="#7a8a99"></rect><rect x="578" y="372" width="1" height="1" fill="#7a8a99"></rect><rect x="574" y="374" width="1" height="1" fill="#ffffff"></rect><rect x="575" y="375" width="2" height="1" fill="#7a8a99"></rect><rect x="578" y="377" width="1" height="1" fill="#7a8a99"></rect><rect x="574" y="379" width="1" height="1" fill="#ffffff"></rect><rect x="575" y="380" width="2" height="1" fill="#7a8a99"></rect><rect x="578" y="382" width="1" height="1" fill="#7a8a99"></rect><rect x="574" y="384" width="1" height="1" fill="#ffffff"></rect><rect x="575" y="385" width="2" height="1" fill="#7a8a99"></rect><rect x="578" y="387" width="1" height="1" fill="#7a8a99"></rect><rect x="574" y="389" width="1" height="1" fill="#ffffff"></rect><rect x="575" y="390" width="2" height="1" fill="#7a8a99"></rect><rect x="578" y="392" width="1" height="1" fill="#7a8a99"></rect><rect x="574" y="394" width="1" height="1" fill="#ffffff"></rect><rect x="575" y="395" width="2" height="1" fill="#7a8a99"></rect><rect x="578" y="397" width="1" height="1" fill="#7a8a99"></rect><rect x="574" y="399" width="1" height="1" fill="#ffffff"></rect><rect x="575" y="400" width="2" height="1" fill="#7a8a99"></rect><rect x="578" y="402" width="1" height="1" fill="#7a8a99"></rect><rect x="574" y="404" width="1" height="1" fill="#ffffff"></rect><rect x="575" y="405" width="2" height="1" fill="#7a8a99"></rect><rect x="578" y="407" width="1" height="1" fill="#7a8a99"></rect><rect x="574" y="409" width="1" height="1" fill="#ffffff"></rect><rect x="575" y="410" width="2" height="1" fill="#7a8a99"></rect><rect x="578" y="412" width="1" height="1" fill="#7a8a99"></rect><rect x="574" y="414" width="1" height="1" fill="#ffffff"></rect><rect x="575" y="415" width="2" height="1" fill="#7a8a99"></rect><rect x="578" y="417" width="1" height="1" fill="#7a8a99"></rect><rect x="574" y="419" width="1" height="1" fill="#ffffff"></rect><rect x="575" y="420" width="2" height="1" fill="#7a8a99"></rect><rect x="578" y="422" width="1" height="1" fill="#7a8a99"></rect><rect x="574" y="424" width="1" height="1" fill="#ffffff"></rect><rect x="575" y="425" width="2" height="1" fill="#7a8a99"></rect><rect x="578" y="427" width="1" height="1" fill="#7a8a99"></rect><rect x="574" y="429" width="1" height="1" fill="#ffffff"></rect><rect x="575" y="430" width="2" height="1" fill="#7a8a99"></rect><rect x="578" y="432" width="1" height="1" fill="#7a8a99"></rect><rect x="574" y="434" width="1" height="1" fill="#ffffff"></rect><rect x="575" y="435" width="2" height="1" fill="#7a8a99"></rect><rect x="578" y="437" width="1" height="1" fill="#7a8a99"></rect><rect x="574" y="439" width="1" height="1" fill="#ffffff"></rect><rect x="575" y="440" width="2" height="1" fill="#7a8a99"></rect><rect x="578" y="442" width="1" height="1" fill="#7a8a99"></rect><rect x="574" y="444" width="1" height="1" fill="#ffffff"></rect><rect x="575" y="445" width="2" height="1" fill="#7a8a99"></rect><rect x="578" y="447" width="1" height="1" fill="#7a8a99"></rect><rect x="574" y="449" width="1" height="1" fill="#ffffff"></rect><rect x="575" y="450" width="2" height="1" fill="#7a8a99"></rect><rect x="578" y="452" width="1" height="1" fill="#7a8a99"></rect><rect x="574" y="454" width="1" height="1" fill="#ffffff"></rect><rect x="575" y="455" width="2" height="1" fill="#7a8a99"></rect><rect x="578" y="457" width="1" height="1" fill="#7a8a99"></rect><rect x="574" y="459" width="1" height="1" fill="#ffffff"></rect><rect x="575" y="460" width="2" height="1" fill="#7a8a99"></rect><rect x="578" y="462" width="1" height="1" fill="#7a8a99"></rect><rect x="574" y="464" width="1" height="1" fill="#ffffff"></rect><rect x="575" y="465" width="2" height="1" fill="#7a8a99"></rect><rect x="578" y="467" width="1" height="1" fill="#7a8a99"></rect><rect x="574" y="469" width="1" height="1" fill="#ffffff"></rect><rect x="575" y="470" width="2" height="1" fill="#7a8a99"></rect><rect x="578" y="472" width="1" height="1" fill="#7a8a99"></rect><rect x="574" y="474" width="1" height="1" fill="#ffffff"></rect><rect x="575" y="475" width="2" height="1" fill="#7a8a99"></rect><rect x="578" y="477" width="1" height="1" fill="#7a8a99"></rect><rect x="574" y="479" width="1" height="1" fill="#ffffff"></rect><rect x="575" y="480" width="2" height="1" fill="#7a8a99"></rect><rect x="578" y="482" width="1" height="1" fill="#7a8a99"></rect><rect x="574" y="484" width="1" height="1" fill="#ffffff"></rect><rect x="575" y="485" width="2" height="1" fill="#7a8a99"></rect><rect x="578" y="487" width="1" height="1" fill="#7a8a99"></rect><rect x="574" y="489" width="1" height="1" fill="#ffffff"></rect><rect x="575" y="490" width="2" height="1" fill="#7a8a99"></rect><rect x="578" y="492" width="1" height="1" fill="#7a8a99"></rect><rect x="574" y="494" width="1" height="1" fill="#ffffff"></rect><rect x="575" y="495" width="2" height="1" fill="#7a8a99"></rect><rect x="578" y="497" width="1" height="1" fill="#7a8a99"></rect><rect x="574" y="499" width="1" height="1" fill="#ffffff"></rect><rect x="575" y="500" width="2" height="1" fill="#7a8a99"></rect><rect x="578" y="502" width="1" height="1" fill="#7a8a99"></rect><rect x="574" y="504" width="1" height="1" fill="#ffffff"></rect><rect x="575" y="505" width="2" height="1" fill="#7a8a99"></rect><rect x="578" y="507" width="1" height="1" fill="#7a8a99"></rect><rect x="574" y="509" width="1" height="1" fill="#ffffff"></rect><rect x="575" y="510" width="2" height="1" fill="#7a8a99"></rect><rect x="578" y="512" width="1" height="1" fill="#7a8a99"></rect><rect x="574" y="514" width="1" height="1" fill="#ffffff"></rect><rect x="575" y="515" width="2" height="1" fill="#7a8a99"></rect><rect x="578" y="517" width="1" height="1" fill="#7a8a99"></rect><rect x="574" y="519" width="1" height="1" fill="#ffffff"></rect><rect x="575" y="520" width="2" height="1" fill="#7a8a99"></rect><rect x="578" y="522" width="1" height="1" fill="#7a8a99"></rect><rect x="574" y="524" width="1" height="1" fill="#ffffff"></rect><rect x="575" y="525" width="2" height="1" fill="#7a8a99"></rect><rect x="578" y="527" width="1" height="1" fill="#7a8a99"></rect><rect x="574" y="529" width="1" height="1" fill="#ffffff"></rect><rect x="575" y="530" width="2" height="1" fill="#7a8a99"></rect><rect x="578" y="532" width="1" height="1" fill="#7a8a99"></rect><rect x="574" y="534" width="1" height="1" fill="#ffffff"></rect><rect x="575" y="535" width="2" height="1" fill="#7a8a99"></rect><rect x="578" y="537" width="1" height="1" fill="#7a8a99"></rect><rect x="574" y="539" width="1" height="1" fill="#ffffff"></rect><rect x="575" y="540" width="2" height="1" fill="#7a8a99"></rect><rect x="578" y="542" width="1" height="1" fill="#7a8a99"></rect><rect x="574" y="544" width="1" height="1" fill="#ffffff"></rect><rect x="575" y="545" width="2" height="1" fill="#7a8a99"></rect><rect x="578" y="547" width="1" height="1" fill="#7a8a99"></rect><rect x="574" y="549" width="1" height="1" fill="#ffffff"></rect><rect x="575" y="550" width="2" height="1" fill="#7a8a99"></rect><rect x="578" y="552" width="1" height="1" fill="#7a8a99"></rect><rect x="574" y="554" width="1" height="1" fill="#ffffff"></rect><rect x="575" y="555" width="2" height="1" fill="#7a8a99"></rect></svg>
<div style="left:581px;top:31px;width:1px;height:528px;background:#7a8a99;"></div>
<div style="left:582px;top:31px;width:1px;height:528px;background:#ffffff;"></div>
<div style="left:583px;top:31px;width:603px;height:484px;background:#ffffff;border-top:1px solid #7a8a99;border-left:1px solid #7a8a99;border-right:1px solid #7a8a99;"></div>
<div style="left:584px;top:32px;width:584px;height:462px;overflow:hidden">
<span class="t" style="left: 0px; top: 1px; letter-spacing: -0.115px;">public class CyclomaticComplexityCheck</span>
<span class="t" style="left: 16px; top: 21px; letter-spacing: -0.118px;">extends AbstractCheck {</span>
<span class="t" style="left: 16px; top: 61px; letter-spacing: -0.172px;">/**</span>
<span class="t" style="left: 20px; top: 81px; letter-spacing: -0.17px;">* A key is pointing to the warning message text in "messages.properties"</span>
<span class="t" style="left: 20px; top: 101px; letter-spacing: -0.127px;">* file.</span>
<span class="t" style="left: 20px; top: 121px; letter-spacing: -0.216px;">*/</span>
<span class="t" style="left: 16px; top: 141px; letter-spacing: -0.187px;">public static final String MSG_KEY = "cyclomaticComplexity";</span>
<span class="t" style="left: 16px; top: 181px; letter-spacing: -0.214px;">/** The initial current value. */</span>
<span class="t" style="left: 16px; top: 201px; letter-spacing: -0.309px;">private static final BigInteger INITIAL_VALUE = BigInteger.ONE;</span>
<span class="t" style="left: 16px; top: 241px; letter-spacing: -0.155px;">/** Default allowed complexity. */</span>
<span class="t" style="left: 16px; top: 261px; letter-spacing: -0.249px;">private static final int DEFAULT_COMPLEXITY_VALUE = 10;</span>
<span class="t" style="left: 16px; top: 301px; letter-spacing: -0.203px;">/** Stack of values - all but the current value. */</span>
<span class="t" style="left: 16px; top: 321px; letter-spacing: -0.203px;">private final Deque&lt;BigInteger&gt; valueStack = new ArrayDeque&lt;&gt;();</span>
<span class="t" style="left: 16px; top: 361px; letter-spacing: -0.175px;">/** Control whether to treat the whole switch block as a single decision point. */</span>
<span class="t" style="left: 16px; top: 381px; letter-spacing: -0.171px;">private boolean switchBlockAsSingleDecisionPoint;</span>
<span class="t" style="left: 16px; top: 421px; letter-spacing: -0.226px;">/** The current value. */</span>
<span class="t" style="left: 16px; top: 441px; letter-spacing: -0.338px;">private BigInteger currentValue = INITIAL_VALUE;</span>
</div>
<div style="left:1168px;top:32px;width:18px;height:462px;background:#eeeeee;border-left:1px solid #7a8a99;border-right:1px solid #7a8a99;"></div>
<div style="left:1168px;top:32px;width:18px;height:20px;background:#eeeeee;border-left:1px solid #7a8a99;border-right:1px solid #7a8a99;border-bottom:1px solid #7a8a99;"></div>
<div style="left:1169px;top:32px;width:1px;height:19px;background:#fff;"></div>
<div style="left:1169px;top:32px;width:16px;height:1px;background:#fff;"></div>
<svg style="left:1172px;top:38px" width="11" height="6" viewBox="0 0 11 6"><path d="M0 5.5 L5.5 0 L11 5.5 Z" fill="#333"></path></svg>
<div style="left:1168px;top:174px;width:17px;height:37px;background:linear-gradient(90deg,#dde8f3 0%,#ffffff 30%,#dde8f3 60%,#b8cfe5 100%);border:1px solid #6382bf;border-top-width:2px;border-right:none;"></div>
<div style="left:1172px;top:188px;width:12px;height:9px;background:#ffffff;"></div>
<div style="left:1173px;top:189.5px;width:10px;height:1.5px;background:#6382bf;"></div>
<div style="left:1173px;top:192px;width:10px;height:1px;background:#6382bf;"></div>
<div style="left:1173px;top:194.5px;width:10px;height:1.5px;background:#6382bf;"></div>
<div style="left:1168px;top:476px;width:18px;height:18px;background:#eeeeee;border-top:1px solid #7a8a99;border-left:1px solid #7a8a99;border-right:1px solid #7a8a99;"></div>
<div style="left:1169px;top:477px;width:1px;height:17px;background:#fff;"></div>
<div style="left:1169px;top:477px;width:16px;height:1px;background:#fff;"></div>
<svg style="left:1172px;top:482px" width="11" height="6" viewBox="0 0 11 6"><path d="M0 0 L5.5 5.5 L11 0 Z" fill="#333"></path></svg>
<div style="left:583px;top:494px;width:603px;height:20px;background:#eeeeee;border-top:1px solid #7a8a99;border-bottom:1px solid #7a8a99;border-left:1px solid #7a8a99;"></div>
<div style="left:584px;top:495px;width:19px;height:18px;background:#eeeeee;border-top:1px solid #fff;border-left:1px solid #fff;"></div>
<svg style="left:590px;top:498px" width="6" height="11" viewBox="0 0 6 11"><path d="M5.5 0 L0 5.5 L5.5 11 Z" fill="#333"></path></svg>
<div style="left:603px;top:494px;width:501px;height:20px;background:linear-gradient(#dde8f3 0%,#ffffff 30%,#dde8f3 60%,#b8cfe5 100%);border:1px solid #6382bf;border-top-width:2px;border-bottom-color:#7a8a99;"></div>
<div style="left:849px;top:498px;width:8px;height:14px;background:#ffffff;"></div>
<div style="left:850px;top:499px;width:1px;height:12px;background:#6382bf;"></div>
<div style="left:853px;top:499px;width:1px;height:12px;background:#6382bf;"></div>
<div style="left:855px;top:499px;width:1px;height:12px;background:#6382bf;"></div>
<div style="left:1148px;top:495px;width:19px;height:18px;background:#eeeeee;border-left:1px solid #7a8a99;border-top:1px solid #fff;"></div>
<svg style="left:1155px;top:498px" width="6" height="11" viewBox="0 0 6 11"><path d="M0 0 L5.5 5.5 L0 11 Z" fill="#333"></path></svg>
<div style="left:1167px;top:494px;width:19px;height:20px;background:#eeeeee;border-left:1px solid #7a8a99;border-top:1px solid #7a8a99;border-bottom:1px solid #7a8a99;border-right:1px solid #7a8a99;"></div>
<div style="left:583px;top:516px;width:122px;height:43px;background:linear-gradient(#dde8f3 0%,#ffffff 30%,#dde8f3 60%,#b8cfe5 100%);border:1px solid #7a8a99;"></div>
<div style="left:704px;top:516px;width:123px;height:43px;background:linear-gradient(#dde8f3 0%,#ffffff 30%,#dde8f3 60%,#b8cfe5 100%);border:1px solid #7a8a99;"></div>
<span class="b" style="left: 610px; top: 528px; letter-spacing: 0.02px;">Open File</span>
<div style="left:610px;top:545px;width:12px;height:1.5px;background:#222;"></div>
<span class="b" style="left: 726.2px; top: 528px; letter-spacing: -0.003px;">Reload File</span>
<div style="left:727px;top:545px;width:11px;height:1.5px;background:#222;"></div>
<span class="b" style="left: 846.4px; top: 528px; letter-spacing: 0.06px;">Modes:</span>
<div style="left:847px;top:545px;width:13px;height:1.5px;background:#222;"></div>
<div style="left:905px;top:522px;width:278px;height:31px;background:#eeeeee;border:1px solid #7a8a99;"></div>
<div style="left:906px;top:523px;width:253px;height:29px;border:1px solid #b8cfe5;"></div>
<span class="b" style="left: 909px; top: 528px; letter-spacing: -0.264px;">Java with comments and Javadocs</span>
<div style="left:1159px;top:522px;width:24px;height:31px;background:linear-gradient(#dde8f3 0%,#ffffff 30%,#dde8f3 60%,#b8cfe5 100%);border:1px solid #7a8a99;border-left-color:#b8cfe5;"></div>
<svg style="left:1165px;top:534px" width="12" height="7" viewBox="0 0 12 7"><path d="M0 0 L6 6.5 L12 0 Z" fill="#333"></path></svg>
<div style="left:3px;top:558px;width:568px;height:2px;background:#ffffff;"></div>
<div style="left:581px;top:559px;width:606px;height:1px;background:#ffffff;"></div>
<div style="left:5px;top:571px;width:1182px;height:70px;border:1px solid #b8cfe5;"></div>
<div style="left:10px;top:562px;width:94px;height:18px;background:#eeeeee;"></div>
<span class="b" style="left: 13.5px; top: 562px; letter-spacing: -0.189px;">Xpath Query</span>
<div style="left:15px;top:589px;width:161px;height:33px;background:linear-gradient(#dde8f3 0%,#ffffff 30%,#dde8f3 60%,#b8cfe5 100%);border:1px solid #7a8a99;"></div>
<span class="b" style="left: 36.5px; top: 597px; letter-spacing: -0.205px;">Expand/Collapse</span>
<div style="left:183px;top:589px;width:178px;height:33px;background:linear-gradient(#dde8f3 0%,#ffffff 30%,#dde8f3 60%,#b8cfe5 100%);border:1px solid #7a8a99;"></div>
<span class="b" style="left: 203.4px; top: 597px; letter-spacing: -0.163px;">Find node by Xpath</span>
</body></html>
